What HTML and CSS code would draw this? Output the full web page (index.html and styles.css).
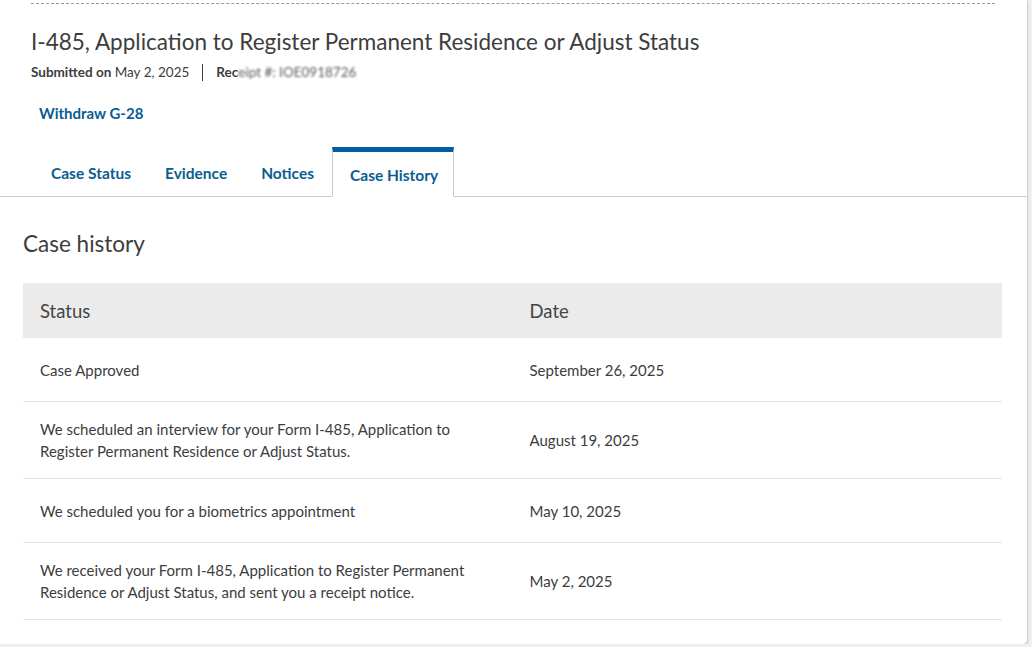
FILE: index.html
```html
<!DOCTYPE html>
<html lang="en">

<head>
    <meta charset="UTF-8" />
    <meta name="viewport" content="width=device-width, initial-scale=1.0" />
    <title>Case History</title>
    <link rel="stylesheet" href="styles.css">
</head>

<body>
    <div class="card">
        <div class="caseHeader">
            <h1 class="caseTitle">I-485, Application to Register Permanent Residence or Adjust Status</h1>
            <div class="caseMeta">
                <span><strong>Submitted on</strong> May 2, 2025</span>
                <span class="divider"></span>
                <span><strong>Rec</strong><span class="blurred">eipt #: IOE0918726</span></span>
            </div>
            <a class="withdraw" href="#">Withdraw G-28</a>
        </div>

        <div class="tabs">
            <a class="tab" href="#">Case Status</a>
            <a class="tab" href="#">Evidence</a>
            <a class="tab" href="#">Notices</a>
            <a class="tab active" href="#">Case History</a>
        </div>

        <div class="historySection">
            <h2 class="sectionTitle">Case history</h2>
            <table class="historyTable">
                <thead>
                    <tr>
                        <th>Status</th>
                        <th>Date</th>
                    </tr>
                </thead>
                <tbody>
                    <tr>
                        <td>Case Approved</td>
                        <td>September 26, 2025</td>
                    </tr>
                    <tr>
                        <td>We scheduled an interview for your Form I-485, Application to Register Permanent Residence or Adjust Status.</td>
                        <td>August 19, 2025</td>
                    </tr>
                    <tr>
                        <td>We scheduled you for a biometrics appointment</td>
                        <td>May 10, 2025</td>
                    </tr>
                    <tr>
                        <td>We received your Form I-485, Application to Register Permanent Residence or Adjust Status, and sent you a receipt notice.</td>
                        <td>May 2, 2025</td>
                    </tr>
                </tbody>
            </table>
        </div>
    </div>
</body>

</html>
```

FILE: styles.css
```css
body {
    margin: 0;
    background: #f0f0f0;
    font-family: Lato, "Liberation Sans", sans-serif;
    color: #3d3d3d;
}

.card {
    background: #fff;
    margin-right: 5px;
    padding-bottom: 24px;
    border-radius: 0 0 4px 0;
    box-shadow: 0 1px 3px rgba(0, 0, 0, 0.35);
}

.caseHeader {
    margin: 0 32px 0 31px;
    padding-top: 3px;
}

.caseHeader::before {
    content: "";
    display: block;
    border-top: 1px dashed #999;
}

.caseTitle {
    margin: 24px 0 0;
    font-size: 22.5px;
    font-weight: normal;
    line-height: 28px;
    color: #3d3d3d;
}

.caseMeta {
    display: flex;
    align-items: center;
    gap: 13px;
    margin-top: 7px;
    font-size: 13.5px;
    line-height: 18px;
}

.caseMeta strong {
    font-weight: bold;
}

.divider {
    width: 1px;
    height: 17px;
    background: #3d3d3d;
}

.blurred {
    filter: blur(1.1px);
    color: #5a5a5a;
}

.withdraw {
    display: inline-block;
    margin: 22px 0 0 8px;
    font-size: 15px;
    font-weight: bold;
    line-height: 20px;
    color: #0a5d91;
    text-decoration: none;
}

.tabs {
    display: flex;
    align-items: flex-end;
    margin-top: 24px;
    padding-left: 33px;
    border-bottom: 1px solid #c9c9c9;
}

.tab {
    padding: 0 16px 13px 18px;
    font-size: 15.5px;
    font-weight: bold;
    line-height: 20px;
    color: #0a5d91;
    text-decoration: none;
}

.tab.active {
    padding: 13px 15px 11px 17px;
    margin-left: 2px;
    margin-bottom: -1px;
    background: #fff;
    border: 1px solid #c9c9c9;
    border-top: 5px solid #005ea2;
    border-bottom: 1px solid #fff;
}

.historySection {
    padding: 0 25px 0 23px;
}

.sectionTitle {
    margin: 33px 0 25px;
    font-size: 22.5px;
    font-weight: normal;
    line-height: 28px;
    color: #3d3d3d;
}

.historyTable {
    width: 100%;
    border-collapse: collapse;
}

.historyTable th {
    width: 50%;
    height: 55px;
    padding: 0 17px;
    background: #ebebeb;
    font-size: 18.5px;
    font-weight: normal;
    text-align: left;
    color: #454545;
}

.historyTable td {
    height: 31px;
    padding: 16px 17px;
    font-size: 15px;
    line-height: 22px;
    border-bottom: 1px solid #e6e6e6;
    vertical-align: middle;
}

.historyTable td:first-child {
    padding-right: 40px;
}
```
